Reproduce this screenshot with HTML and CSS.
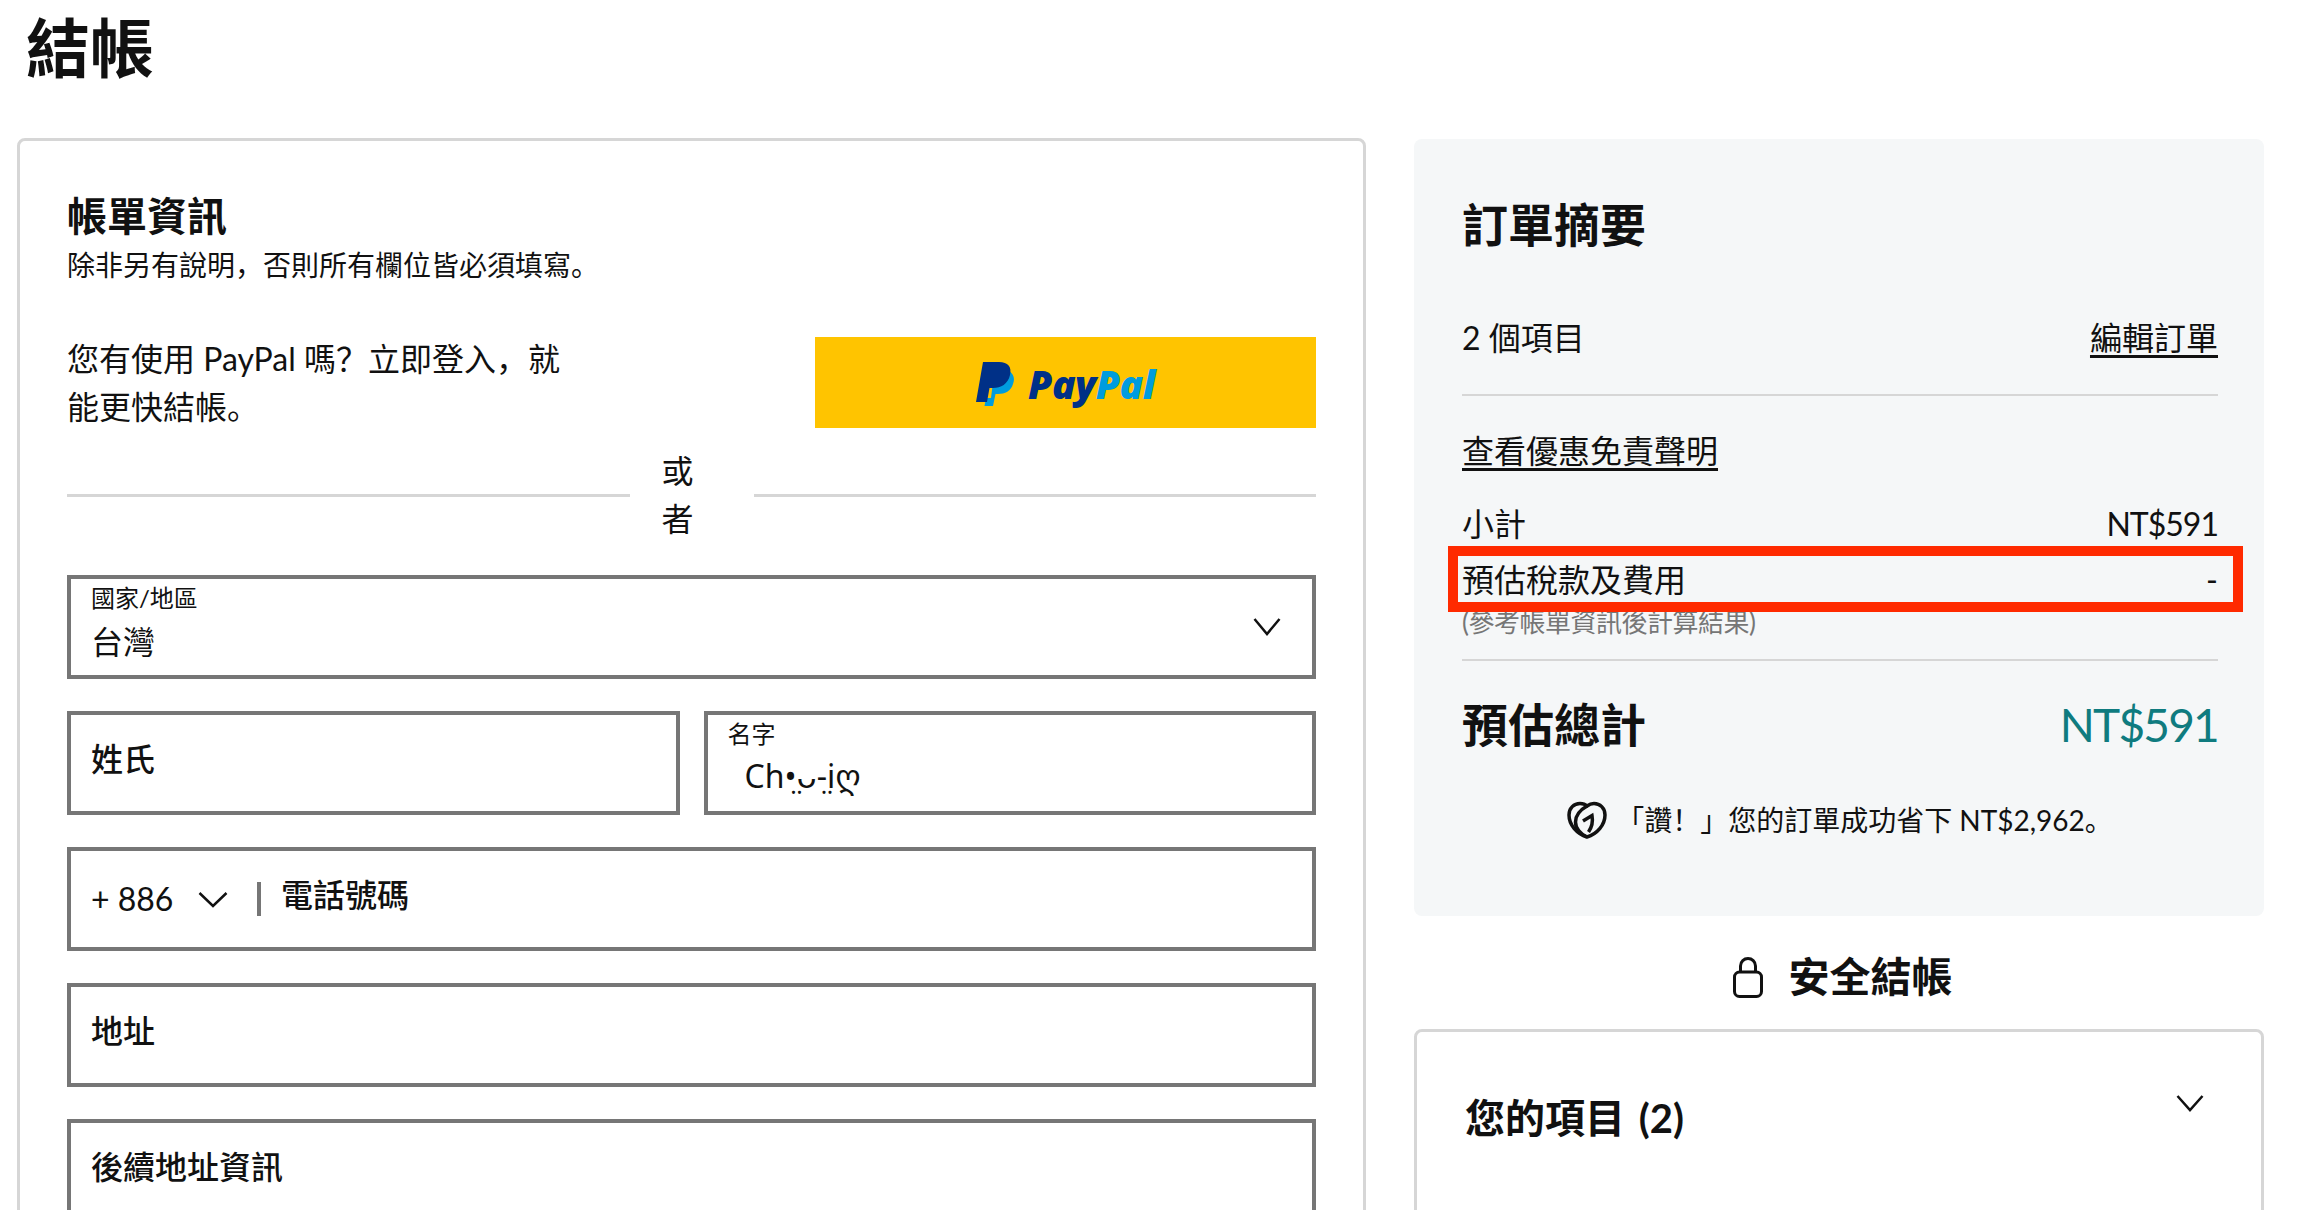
FILE: index.html
```html
<!DOCTYPE html>
<html lang="zh">
<head>
<meta charset="utf-8">
<title>結帳</title>
<link rel="stylesheet" href="styles.css">
</head>
<body>
<div class="page">
  <h1 class="page-title">結帳</h1>
  <div class="layout">
    <main class="card billing">
      <h2 class="billing-title">帳單資訊</h2>
      <p class="billing-note">除非另有說明&#xFF0C;否則所有欄位皆必須填寫。</p>
      <div class="paypal-row">
        <p class="paypal-text">您有使用 PayPal 嗎&#xFF1F;立即登入&#xFF0C;就能更快結帳。</p>
        <button class="paypal-btn" type="button">
          <svg class="paypal-mark" viewBox="0 0 38 44" width="38" height="44" aria-hidden="true">
            <path fill="#009cde" d="M33 9C38 12 39 17 37 22C35 29 29 32 22 32H19.500L17 44H8.500L10 36H15L18 12Z"/>
            <path fill="#003087" d="M7 0H23C32 0 36 5 34 13C32 22 25 26 17 26H13.500L11 40H0Z"/>
          </svg>
          <span class="paypal-word"><span class="pay">Pay</span><span class="pal">Pal</span></span>
        </button>
      </div>
      <div class="or-row">
        <span class="or-line"></span>
        <span class="or-text">或者</span>
        <span class="or-line"></span>
      </div>
      <div class="fields">
        <div class="field field-filled">
          <span class="field-label">國家/地區</span>
          <span class="field-value">台灣</span>
          <svg class="chevron field-chevron" viewBox="0 0 28 19" width="28" height="19" aria-hidden="true"><path d="M1.500 2L14 17L26.500 2"/></svg>
        </div>
        <div class="field-pair">
          <div class="field field-empty"><span class="placeholder">姓氏</span></div>
          <div class="field field-filled">
            <span class="field-label">名字</span>
            <span class="field-value field-value-name">Ch•̤ᴗ-̤iღ</span>
          </div>
        </div>
        <div class="field field-phone">
          <span class="dial-code">+ 886</span>
          <svg class="chevron" viewBox="0 0 30 17" width="30" height="17" aria-hidden="true"><path d="M1.500 2L15 15L28.500 2"/></svg>
          <span class="phone-divider"></span>
          <span class="placeholder">電話號碼</span>
        </div>
        <div class="field field-empty"><span class="placeholder">地址</span></div>
        <div class="field field-empty"><span class="placeholder">後續地址資訊</span></div>
      </div>
    </main>
    <aside class="side">
      <section class="summary">
        <h2 class="summary-title">訂單摘要</h2>
        <div class="row row-items"><span>2 個項目</span><a class="link" href="#">編輯訂單</a></div>
        <hr class="rule rule-first">
        <a class="link link-block" href="#">查看優惠免責聲明</a>
        <div class="row row-subtotal"><span>小計</span><span class="amount">NT$591</span></div>
        <div class="row row-tax"><span>預估稅款及費用</span><span>-</span></div>
        <p class="tax-note">(參考帳單資訊後計算結果)</p>
        <hr class="rule rule-second">
        <div class="row row-total"><span class="total-label">預估總計</span><span class="total-value">NT$591</span></div>
        <div class="savings">
          <svg class="savings-logo" viewBox="0 0 40 38" width="40" height="38" aria-hidden="true">
            <path d="M20 36C10 33 2 24 2 14C2 7 7 2.500 13 2.500C16 2.500 18.500 3.500 20 5C22 3.500 24.500 2.500 27 2.500C33 2.500 38 7 38 14C38 24 30 33 20 36Z"/>
            <path d="M20 5C13 9 8.500 15 8.500 21C8.500 27 13 33 20 36"/>
            <path d="M16 20L25 14.500C26 20 25 26 21.500 31"/>
          </svg>
          <span>「讚&#xFF01;」您的訂單成功省下 NT$2,962。</span>
        </div>
      </section>
      <div class="secure">
        <svg class="lock" viewBox="0 0 30 41" width="30" height="41" aria-hidden="true">
          <rect x="1.500" y="15" width="27" height="24.500" rx="5"/>
          <path d="M7.500 15V9C7.500 4.500 11 1.500 15 1.500C19 1.500 22.500 4.500 22.500 9V15"/>
        </svg>
        <span>安全結帳</span>
      </div>
      <section class="card items">
        <h2 class="items-title">您的項目 (2)</h2>
        <svg class="chevron items-chevron" viewBox="0 0 28 18" width="28" height="18" aria-hidden="true"><path d="M1.500 2L14 16L26.500 2"/></svg>
      </section>
    </aside>
  </div>
</div>
</body>
</html>
```
FILE: styles.css
```css
* { box-sizing: border-box; }

html, body { margin: 0; background: #fff; }

body {
  color: #111;
  font-family: Lato, "Noto Sans CJK SC", sans-serif;
  font-size: 32px;
  line-height: 48px;
}

.page {
  height: 1210px;
  overflow: hidden;
  padding-left: 17px;
}

.page-title {
  margin: 0 0 42px 9px;
  font-size: 64px;
  line-height: 96px;
  font-weight: 700;
}

.layout {
  display: grid;
  grid-template-columns: 1349px 850px;
  gap: 48px;
  align-items: start;
}

.card {
  border: 3px solid #d6d6d6;
  border-radius: 8px;
  background: #fff;
}

.billing { padding: 47px 47px 80px; }

.billing-title {
  margin: 0;
  font-size: 40px;
  line-height: 56px;
  font-weight: 700;
}

.billing-note {
  margin: 1px 0 0;
  font-size: 28px;
  line-height: 40px;
}

.paypal-row {
  display: flex;
  justify-content: space-between;
  align-items: flex-start;
  margin-top: 52px;
}

.paypal-text {
  width: 510px;
  margin: -2px 0 0;
}

.paypal-btn {
  display: flex;
  align-items: center;
  justify-content: center;
  gap: 14px;
  width: 501px;
  height: 91px;
  padding: 3px 0 0;
  border: 0;
  background: #ffc400;
}

.paypal-word {
  font-family: "Open Sans", sans-serif;
  font-size: 39px;
  line-height: 44px;
  font-style: italic;
  font-weight: 800;
  letter-spacing: -0.5px;
}

.pay { color: #003087; }
.pal { color: #009cde; }

.or-row {
  display: flex;
  align-items: center;
  margin-top: 16px;
}

.or-line {
  flex: 1;
  height: 3px;
  background: #d6d6d6;
}

.or-text {
  flex: none;
  width: 124px;
  padding: 0 32px;
  text-align: left;
  line-height: 48px;
}

.fields {
  display: flex;
  flex-direction: column;
  gap: 32px;
  margin-top: 32px;
}

.field-pair {
  display: grid;
  grid-template-columns: 1fr 1fr;
  gap: 24px;
}

.field {
  position: relative;
  height: 104px;
  border: 4px solid #767676;
  padding: 0 20px;
  background: #fff;
}

.field-empty {
  display: flex;
  align-items: center;
}

.placeholder {
  position: relative;
  top: -4px;
  font-weight: 500;
}

.field-label {
  display: block;
  margin-top: 3px;
  font-size: 24px;
  line-height: 32px;
}

.field-value {
  display: block;
  margin-top: 4px;
  line-height: 48px;
}

.field-value-name {
  margin-top: 2px;
  padding-left: 17px;
  font-family: "Noto Sans", "DejaVu Sans", sans-serif;
}

.chevron {
  flex: none;
  fill: none;
  stroke: #111;
  stroke-width: 2.500;
}

.field-chevron {
  position: absolute;
  top: 38px;
  right: 31px;
}

.field-phone {
  display: flex;
  align-items: center;
}

.dial-code { width: 107px; }

.phone-divider {
  width: 4px;
  height: 34px;
  margin: 0 20px 0 29px;
  background: #767676;
}

.side {
  display: flex;
  flex-direction: column;
  padding-top: 1px;
}

.summary {
  height: 777px;
  padding: 54px 46px 0 48px;
  border-radius: 8px;
  background: #f5f7f8;
}

.summary-title {
  margin: 0;
  font-size: 46px;
  line-height: 64px;
  font-weight: 700;
}

.row {
  display: flex;
  justify-content: space-between;
  align-items: center;
}

.row-items { margin-top: 57px; }

.rule {
  height: 2px;
  margin: 0;
  border: 0;
  background: #d6d6d6;
}

.rule-first { margin-top: 32px; }

.link {
  color: #111;
  text-decoration: underline;
  text-underline-offset: 5px;
  text-decoration-thickness: 3px;
}

.link-block {
  display: block;
  width: max-content;
  margin-top: 31px;
}

.row-subtotal { margin-top: 25px; }

.amount { letter-spacing: -1px; }

.row-tax {
  position: relative;
  margin-top: 8px;
}

.row-tax::after {
  content: "";
  position: absolute;
  inset: -10px -25px -8px -14px;
  border: 10px solid #ff2a00;
}

.tax-note {
  margin: 0;
  color: #767676;
  font-size: 26px;
  line-height: 36px;
  letter-spacing: -0.5px;
}

.rule-second { margin-top: 19px; }

.row-total {
  margin-top: 32px;
  line-height: 64px;
}

.total-label {
  font-size: 46px;
  font-weight: 700;
}

.total-value {
  color: #0f7b7f;
  font-size: 46px;
  letter-spacing: -1.800px;
}

.savings {
  display: flex;
  justify-content: center;
  align-items: center;
  gap: 9px;
  margin-top: 43px;
  font-size: 28px;
  line-height: 40px;
}

.savings-logo {
  fill: none;
  stroke: #111;
  stroke-width: 3.500;
}

.secure {
  display: flex;
  justify-content: center;
  align-items: center;
  gap: 26px;
  margin-top: 33px;
  padding-left: 7px;
  font-size: 41px;
  line-height: 56px;
  font-weight: 700;
}

.lock {
  fill: none;
  stroke: #111;
  stroke-width: 3;
}

.items {
  position: relative;
  height: 400px;
  margin-top: 24px;
  padding: 58px 48px 0;
}

.items-title {
  margin: 0;
  font-size: 40px;
  line-height: 56px;
  font-weight: 700;
  word-spacing: 4px;
}

.items-chevron {
  position: absolute;
  top: 62px;
  right: 57px;
}
```
